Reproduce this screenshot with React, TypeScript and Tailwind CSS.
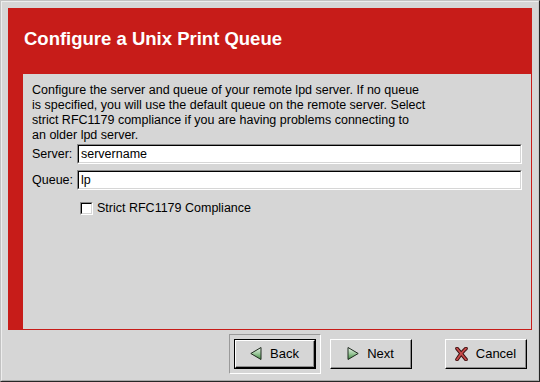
const font = { fontFamily: '"Liberation Sans", Arial, Helvetica, sans-serif' };

function BackArrow() {
  return (
    <svg width="12" height="13" viewBox="0 0 12 13">
      <defs>
        <linearGradient id="ga" x1="0" y1="0" x2="0" y2="1">
          <stop offset="0" stopColor="#eef5ee" />
          <stop offset="0.5" stopColor="#9cc89c" />
          <stop offset="1" stopColor="#3f8a3f" />
        </linearGradient>
      </defs>
      <polygon points="11,0.5 0.8,6.5 11,12.5" fill="url(#ga)" stroke="#1e2a1e" strokeWidth="1" />
    </svg>
  );
}

function NextArrow() {
  return (
    <svg width="12" height="13" viewBox="0 0 12 13">
      <defs>
        <linearGradient id="gb" x1="0" y1="0" x2="0" y2="1">
          <stop offset="0" stopColor="#eef5ee" />
          <stop offset="0.5" stopColor="#9cc89c" />
          <stop offset="1" stopColor="#3f8a3f" />
        </linearGradient>
      </defs>
      <polygon points="1,0.5 11.2,6.5 1,12.5" fill="url(#gb)" stroke="#1e2a1e" strokeWidth="1" />
    </svg>
  );
}

function CancelX() {
  return (
    <svg width="13" height="14" viewBox="0 0 13 14">
      <path d="M2 1.5 L11 12.5 M11 1.5 C8 4 5 8 2 12.5" stroke="#3a1010" strokeWidth="3.6" strokeLinecap="round" fill="none" />
      <path d="M2 1.5 L11 12.5 M11 1.5 C8 4 5 8 2 12.5" stroke="#c84a4a" strokeWidth="1.8" strokeLinecap="round" fill="none" />
    </svg>
  );
}

function Button({ icon, label, isDefault }: { icon: React.ReactNode; label: string; isDefault?: boolean }) {
  const body = (
    <div className="w-full h-full border-t border-l border-white border-b border-r border-b-black border-r-black">
      <div className="w-full h-full border-b border-r border-[#8e8e8e] flex items-center justify-center gap-[8px] text-[13px] text-black">
        {icon}
        <span>{label}</span>
      </div>
    </div>
  );
  if (isDefault) {
    return (
      <div className="w-[92px] h-[40px] border-t border-l border-[#9a9a9a] border-b border-r border-b-white border-r-white p-[4px]">
        <div className="w-full h-full border border-black">{body}</div>
      </div>
    );
  }
  return <div className="w-[82px] h-[30px]">{body}</div>;
}

function Entry({ value }: { value: string }) {
  return (
    <div className="flex-1 h-[20px] border-t border-l border-[#8a8a8a] border-b border-r border-b-white border-r-white">
      <div className="w-full h-full bg-white border-t border-l border-black border-b border-r border-b-[#d6d6d6] border-r-[#d6d6d6] flex items-center pl-[2px] text-black">
        {value}
      </div>
    </div>
  );
}

export default function App() {
  return (
    <div style={font} className="w-[540px] h-[382px] bg-[#d6d6d6] border-t border-l border-[#c2c2c2] border-b border-r border-b-[#262626] border-r-[#262626]">
      <div className="w-full h-full border-t border-l border-[#ededed] border-b border-r border-b-[#a8a8a8] border-r-[#c8c8c8] flex flex-col">
        {/* Red druid page */}
        <div className="mt-[6px] ml-[6px] w-[524px] h-[322px] bg-[#c71c19] flex flex-col">
          <div className="h-[66px] flex items-center pl-[16px] pb-[5px]">
            <h1 className="text-[18.5px] font-bold text-white">Configure a Unix Print Queue</h1>
          </div>
          <div className="flex-1 ml-[15px] mr-px mb-px bg-[#d6d6d6] pl-[9px] pr-[9px] pt-[9px] text-[12.5px] text-black">
            <p className="leading-[15px]">
              Configure the server and queue of your remote lpd server. If no queue
              <br />
              is specified, you will use the default queue on the remote server. Select
              <br />
              strict RFC1179 compliance if you are having problems connecting to
              <br />
              an older lpd server.
            </p>
            <div className="flex items-center mt-[1px]">
              <span className="w-[45px]">Server:</span>
              <Entry value="servername" />
            </div>
            <div className="flex items-center mt-[6px]">
              <span className="w-[45px]">Queue:</span>
              <Entry value="lp" />
            </div>
            <div className="flex items-center mt-[9px] ml-[48px] gap-[4px]">
              <div className="w-[13px] h-[13px] border-t border-l border-[#8a8a8a] border-b border-r border-b-white border-r-white">
                <div className="w-full h-full bg-white border-t border-l border-black border-b border-r border-b-[#d6d6d6] border-r-[#d6d6d6]" />
              </div>
              <span>Strict RFC1179 Compliance</span>
            </div>
          </div>
        </div>
        {/* Buttons */}
        <div className="flex items-center justify-end mt-[4px] mr-[11px]">
          <Button icon={<BackArrow />} label="Back" isDefault />
          <div className="ml-[9px]">
            <Button icon={<NextArrow />} label="Next" />
          </div>
          <div className="ml-[33px]">
            <Button icon={<CancelX />} label="Cancel" />
          </div>
        </div>
      </div>
    </div>
  );
}
